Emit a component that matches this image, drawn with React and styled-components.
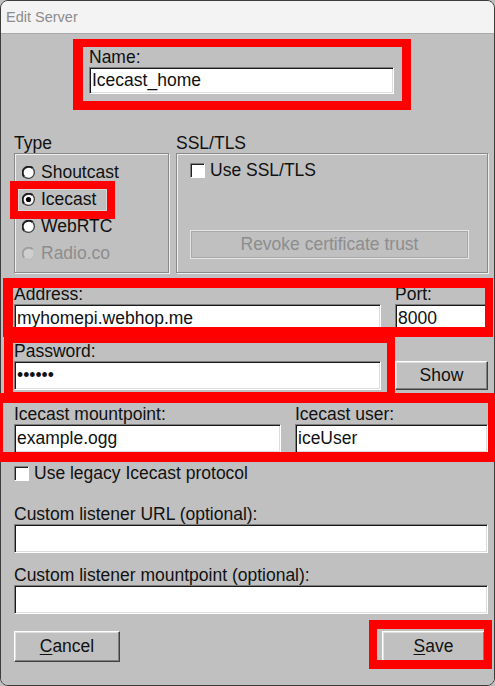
import React from "react";
import styled, { createGlobalStyle, css } from "styled-components";

const GlobalStyle = createGlobalStyle`
  html, body {
    margin: 0;
    padding: 0;
    background: #c0c0c0;
  }
  * {
    box-sizing: border-box;
  }
`;

// red annotation frame drawn over a part of the dialog
const marked = css`
  position: relative;
  &::after {
    content: "";
    position: absolute;
    inset: ${(p) => p.$mark.inset};
    border-style: solid;
    border-color: #ff0000;
    border-width: ${(p) => p.$mark.width};
    pointer-events: none;
    z-index: 5;
  }
`;

const Window = styled.div`
  width: 495px;
  height: 686px;
  border: 1px solid #3c3c3c;
  border-radius: 8px;
  display: flex;
  flex-direction: column;
  font-family: "Liberation Sans", Arial, sans-serif;
  font-size: 17.5px;
  color: #111;
`;

const TitleBar = styled.div`
  height: 33px;
  flex: none;
  background: #f3f3f3;
  border-bottom: 1px solid #a9a9a9;
  border-radius: 7px 7px 0 0;
  padding-left: 5px;
  font-size: 14.5px;
  line-height: 32px;
  color: #8c8c8c;
`;

const Body = styled.div`
  flex: 1;
  background: #c0c0c0;
  border-radius: 0 0 7px 7px;
  padding: 13px 6px 0 13px;
  display: flex;
  flex-direction: column;
`;

const NameBox = styled.div`
  width: 319px;
  margin-left: 69px;
  padding: 0 8px 7px 6px;
  display: flex;
  flex-direction: column;
  ${(p) => p.$mark && marked}
`;

const Label = styled.div`
  line-height: 20px;
  height: 20px;
  white-space: nowrap;
`;

const TextInput = styled.input`
  display: block;
  width: 100%;
  height: ${(p) => p.$h || 29}px;
  margin: 0;
  padding: 0 2px;
  font: inherit;
  color: #111;
  background: #fff;
  border: 1px solid;
  border-color: #7f7f7f #ffffff #ffffff #7f7f7f;
  box-shadow: inset 1px 1px 0 #1a1a1a, inset -1px -1px 0 #dcdcdc;
  outline: none;
`;

const GroupsRow = styled.div`
  display: flex;
  gap: 7px;
  margin-top: 32px;
`;

const GroupColumn = styled.div`
  display: flex;
  flex-direction: column;
  width: ${(p) => (p.$w ? `${p.$w}px` : "auto")};
  flex: ${(p) => (p.$w ? "none" : "1")};
`;

const GroupBox = styled.div`
  height: 120px;
  border: 1px solid #8a8a8a;
  box-shadow: inset 1px 1px 0 #efefef, 1px 1px 0 #efefef;
  display: flex;
  flex-direction: column;
  padding: ${(p) => p.$pad};
  justify-content: ${(p) => (p.$spread ? "space-between" : "flex-start")};
`;

const RadioRow = styled.div`
  height: 27px;
  display: flex;
  align-items: center;
`;

const RadioItem = styled.div`
  height: 22px;
  width: 89px;
  margin-left: 3px;
  padding-left: 4px;
  display: flex;
  align-items: center;
  gap: 6px;
  color: ${(p) => (p.$disabled ? "#8d8d8d" : "#111")};
  box-shadow: ${(p) => (p.$focus ? "inset 0 0 0 1px #d6d6d6" : "none")};
  ${(p) => p.$mark && marked}
`;

const CheckRow = styled.div`
  height: ${(p) => p.$h || 20}px;
  display: flex;
  align-items: center;
  gap: 5px;
  margin-top: ${(p) => p.$mt || 0}px;
`;

const CheckBox = styled.span`
  width: 15px;
  height: 15px;
  flex: none;
  background: #fff;
  border: 1px solid;
  border-color: #808080 #ffffff #ffffff #808080;
  box-shadow: inset 1px 1px 0 #202020;
`;

const Button = styled.button`
  height: ${(p) => p.$h || 29}px;
  width: ${(p) => (p.$w ? `${p.$w}px` : "100%")};
  margin: 0;
  padding: 0;
  font: inherit;
  color: #111;
  background: #c0c0c0;
  border: 1px solid;
  border-color: #ffffff #404040 #404040 #ffffff;
  box-shadow: inset -1px -1px 0 #808080, inset 1px 1px 0 #dfdfdf;
  ${(p) =>
    p.disabled &&
    css`
      color: #8d8d8d;
      border-color: #e6e6e6;
      box-shadow: inset -1px -1px 0 #a8a8a8, inset 1px 1px 0 #a8a8a8;
    `}
  ${(p) => p.$mark && marked}
`;

const FieldRow = styled.div`
  display: grid;
  grid-template-columns: ${(p) => p.$cols};
  column-gap: 14px;
  align-items: end;
  margin-top: ${(p) => p.$mt}px;
  ${(p) => p.$mark && marked}
`;

const Field = styled.div`
  display: flex;
  flex-direction: column;
  ${(p) => p.$mark && marked}
`;

const ButtonRow = styled.div`
  display: flex;
  justify-content: space-between;
  margin-top: 17px;
  padding-right: 3px;
`;

const Key = styled.span`
  text-decoration: underline;
  text-underline-offset: 2px;
`;

const Radio = ({ checked, disabled }) => (
  <svg width="13" height="13" viewBox="0 0 13 13" style={{ flex: "none" }}>
    <circle cx="6.5" cy="6.5" r="6" fill={disabled ? "#cfcfcf" : "#fff"} />
    <path
      d="M2.26 10.74 A6 6 0 0 1 10.74 2.26"
      fill="none"
      stroke={disabled ? "#a0a0a0" : "#1e1e1e"}
      strokeWidth="2"
    />
    <path
      d="M10.74 2.26 A6 6 0 0 1 2.26 10.74"
      fill="none"
      stroke={disabled ? "#bdbdbd" : "#3c3c3c"}
      strokeWidth="1.3"
    />
    {checked && <circle cx="6.5" cy="6.5" r="2.6" fill="#000" />}
  </svg>
);

const types = [
  { name: "Shoutcast" },
  { name: "Icecast", checked: true },
  { name: "WebRTC" },
  { name: "Radio.co", disabled: true },
];

export default function App() {
  return (
    <>
      <GlobalStyle />
      <Window>
        <TitleBar>Edit Server</TitleBar>
        <Body>
          <NameBox $mark={{ inset: "-8px -9px -9px -10px", width: "8px 9px 9px 10px" }}>
            <Label>Name:</Label>
            <TextInput $h={27} value="Icecast_home" readOnly />
          </NameBox>

          <GroupsRow>
            <GroupColumn $w={155}>
              <Label>Type</Label>
              <GroupBox $pad="5px 0 0 0">
                {types.map((t) => (
                  <RadioRow key={t.name}>
                    <RadioItem
                      $disabled={t.disabled}
                      $focus={t.checked}
                      $mark={t.checked ? { inset: "-8px", width: "8px" } : null}
                    >
                      <Radio checked={t.checked} disabled={t.disabled} />
                      {t.name}
                    </RadioItem>
                  </RadioRow>
                ))}
              </GroupBox>
            </GroupColumn>
            <GroupColumn>
              <Label>SSL/TLS</Label>
              <GroupBox $pad="6px 18px 13px 13px" $spread>
                <CheckRow>
                  <CheckBox />
                  Use SSL/TLS
                </CheckRow>
                <Button disabled>Revoke certificate trust</Button>
              </GroupBox>
            </GroupColumn>
          </GroupsRow>

          <FieldRow
            $cols="1fr 93px"
            $mt={11}
            $mark={{ inset: "-6px -5px -4px -11px", width: "10px 8px 10px 10px" }}
          >
            <Field>
              <Label>Address:</Label>
              <TextInput value="myhomepi.webhop.me" readOnly />
            </Field>
            <Field>
              <Label>Port:</Label>
              <TextInput value="8000" readOnly />
            </Field>
          </FieldRow>

          <FieldRow $cols="1fr 93px" $mt={8}>
            <Field $mark={{ inset: "-8px -14px -12px -10px", width: "10px 8px 10px 9px" }}>
              <Label>Password:</Label>
              <TextInput value="••••••" readOnly />
            </Field>
            <Button>Show</Button>
          </FieldRow>

          <FieldRow
            $cols="267px 1fr"
            $mt={14}
            $mark={{ inset: "-11px -9px -9px -20px", width: "10px 9px 10px 9px" }}
          >
            <Field>
              <Label>Icecast mountpoint:</Label>
              <TextInput value="example.ogg" readOnly />
            </Field>
            <Field>
              <Label>Icecast user:</Label>
              <TextInput value="iceUser" readOnly />
            </Field>
          </FieldRow>

          <CheckRow $h={17} $mt={12}>
            <CheckBox />
            Use legacy Icecast protocol
          </CheckRow>

          <FieldRow $cols="1fr" $mt={22}>
            <Field>
              <Label>Custom listener URL (optional):</Label>
              <TextInput value="" readOnly />
            </Field>
          </FieldRow>

          <FieldRow $cols="1fr" $mt={12}>
            <Field>
              <Label>Custom listener mountpoint (optional):</Label>
              <TextInput value="" readOnly />
            </Field>
          </FieldRow>

          <ButtonRow>
            <Button $w={106} $h={31}>
              <Key>C</Key>ancel
            </Button>
            <Button
              $w={103}
              $h={31}
              $mark={{ inset: "-12px -8px -8px -14px", width: "9px 8px 9px 8px" }}
            >
              <Key>S</Key>ave
            </Button>
          </ButtonRow>
        </Body>
      </Window>
    </>
  );
}
